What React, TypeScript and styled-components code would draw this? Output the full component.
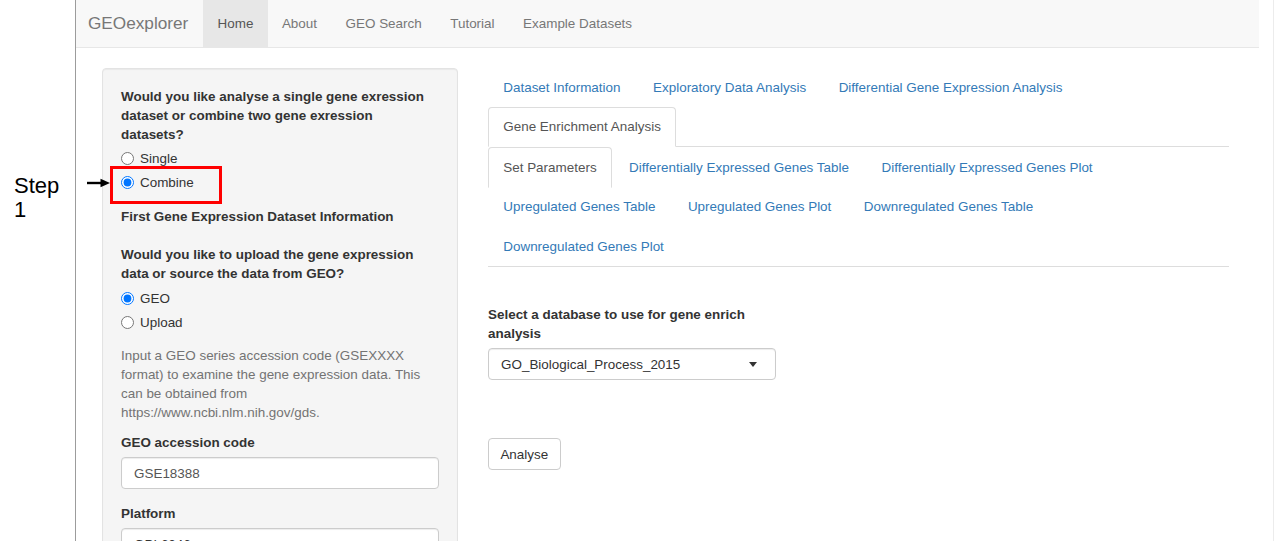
import React from "react";
import styled, { createGlobalStyle } from "styled-components";

const GlobalStyle = createGlobalStyle`
  html, body { margin: 0; padding: 0; background: #fff; }
  body {
    font-family: "Liberation Sans", Arial, Helvetica, sans-serif;
    font-size: 13.45px;
    line-height: 19px;
    color: #333;
    overflow: hidden;
  }
  * { box-sizing: border-box; }
`;

const Page = styled.div`
  display: flex;
  width: 1275px;
  height: 541px;
  overflow: hidden;
`;

const Gutter = styled.div`
  width: 76px;
  flex: none;
  border-right: 1px solid #9c9c9c;
  padding: 174px 0 0 14px;
  font-size: 22px;
  line-height: 24px;
  color: #000;
`;

const App = styled.div`
  width: 1183px;
  flex: none;
  display: flex;
  flex-direction: column;
`;

const ScrollEdge = styled.div`
  margin-left: 14px;
  width: 2px;
  flex: none;
  border-left: 1px solid #ececec;
`;

const Navbar = styled.nav`
  height: 48px;
  flex: none;
  display: flex;
  align-items: stretch;
  background: #f8f8f8;
  border-bottom: 1px solid #e7e7e7;
  padding-left: 12px;
`;

const Brand = styled.span`
  font-size: 17.2px;
  color: #777;
  display: flex;
  align-items: center;
  margin-right: 15px;
`;

const NavLink = styled.span<{ $active?: boolean }>`
  display: flex;
  align-items: center;
  padding: 0 14.25px;
  color: ${(p) => (p.$active ? "#555" : "#777")};
  background: ${(p) => (p.$active ? "#e7e7e7" : "transparent")};
`;

const Body = styled.div`
  display: flex;
  align-items: flex-start;
  gap: 30px;
  padding: 20px 0 0 26px;
`;

const Well = styled.div`
  width: 356px;
  min-height: 620px;
  flex: none;
  background: #f5f5f5;
  border: 1px solid #e3e3e3;
  border-radius: 4px;
  box-shadow: inset 0 1px 1px rgba(0, 0, 0, 0.05);
  padding: 18px;
`;

const FieldLabel = styled.div<{ $mt?: number }>`
  font-weight: bold;
  margin-top: ${(p) => p.$mt ?? 0}px;
`;

const RadioRow = styled.label<{ $mt?: number }>`
  position: relative;
  display: flex;
  align-items: center;
  gap: 6px;
  height: 19px;
  margin-top: ${(p) => p.$mt ?? 5}px;
  input {
    margin: 0;
    width: 13px;
    height: 13px;
  }
`;

const Highlight = styled.span`
  position: absolute;
  left: -11px;
  top: -7px;
  width: 112px;
  height: 38px;
  border: 3px solid #ff0000;
  pointer-events: none;
`;

const Arrow = styled.svg`
  position: absolute;
  left: -34px;
  top: 5px;
`;

const HelpText = styled.div<{ $mt?: number }>`
  color: #737373;
  line-height: 19.3px;
  margin-top: ${(p) => p.$mt ?? 0}px;
`;

const TextBox = styled.div<{ $mt?: number }>`
  margin-top: ${(p) => p.$mt ?? 0}px;
  height: 32px;
  display: flex;
  align-items: center;
  padding: 0 12px;
  background: #fff;
  border: 1px solid #ccc;
  border-radius: 4px;
  box-shadow: inset 0 1px 1px rgba(0, 0, 0, 0.075);
  color: #555;
`;

const SelectBox = styled.div<{ $mt?: number; $width?: number }>`
  margin-top: ${(p) => p.$mt ?? 0}px;
  width: ${(p) => (p.$width ? `${p.$width}px` : "100%")};
  height: 32px;
  display: flex;
  align-items: center;
  justify-content: space-between;
  padding: 0 18px 0 12px;
  background: #fff;
  border: 1px solid #ccc;
  border-radius: 4px;
  box-shadow: inset 0 1px 1px rgba(0, 0, 0, 0.075);
  color: #333;
`;

const Caret = styled.span`
  width: 0;
  height: 0;
  border-left: 4.5px solid transparent;
  border-right: 4.5px solid transparent;
  border-top: 5px solid #333;
`;

const Main = styled.div`
  width: 741px;
  flex: none;
  margin-top: -1px;
`;

const Tabs = styled.ul`
  list-style: none;
  margin: 0;
  padding: 0;
  display: flex;
  flex-wrap: wrap;
  border-bottom: 1px solid #ddd;
`;

const Tab = styled.li<{ $active?: boolean }>`
  margin: 0 2px -1px 0;
  padding: 9.75px 14.25px;
  line-height: 19px;
  border: 1px solid ${(p) => (p.$active ? "#ddd" : "transparent")};
  border-bottom-color: transparent;
  border-radius: 4px 4px 0 0;
  background: ${(p) => (p.$active ? "#fff" : "transparent")};
  color: ${(p) => (p.$active ? "#555" : "#337ab7")};
  white-space: nowrap;
`;

const Pane = styled.div`
  padding-top: 38px;
`;

const SelectLabel = styled.div`
  width: 288px;
  font-weight: bold;
`;

const Button = styled.button`
  margin-top: 58px;
  height: 32px;
  padding: 0 11.4px;
  font: inherit;
  color: #333;
  background: #fff;
  border: 1px solid #ccc;
  border-radius: 4px;
`;

const topTabs = [
  "Dataset Information",
  "Exploratory Data Analysis",
  "Differential Gene Expression Analysis",
  "Gene Enrichment Analysis",
];

const subTabs = [
  "Set Parameters",
  "Differentially Expressed Genes Table",
  "Differentially Expressed Genes Plot",
  "Upregulated Genes Table",
  "Upregulated Genes Plot",
  "Downregulated Genes Table",
  "Downregulated Genes Plot",
];

export default function AppRoot() {
  return (
    <>
      <GlobalStyle />
      <Page>
        <Gutter>
          Step
          <br />1
        </Gutter>
        <App>
          <Navbar>
            <Brand>GEOexplorer</Brand>
            <NavLink $active>Home</NavLink>
            <NavLink>About</NavLink>
            <NavLink>GEO Search</NavLink>
            <NavLink>Tutorial</NavLink>
            <NavLink>Example Datasets</NavLink>
          </Navbar>
          <Body>
            <Well>
              <FieldLabel>
                Would you like analyse a single gene exression dataset or combine two gene exression datasets?
              </FieldLabel>
              <RadioRow>
                <input type="radio" name="mode" readOnly />
                Single
              </RadioRow>
              <RadioRow>
                <input type="radio" name="mode" defaultChecked />
                Combine
                <Highlight />
                <Arrow width="24" height="10" viewBox="0 0 24 10">
                  <line x1="0" y1="5" x2="16" y2="5" stroke="#000" strokeWidth="2.4" />
                  <polygon points="13.5,0.8 23,5 13.5,9.2" fill="#000" />
                </Arrow>
              </RadioRow>
              <FieldLabel $mt={15}>First Gene Expression Dataset Information</FieldLabel>
              <FieldLabel $mt={18.5}>
                Would you like to upload the gene expression data or source the data from GEO?
              </FieldLabel>
              <RadioRow $mt={6}>
                <input type="radio" name="src" defaultChecked />
                GEO
              </RadioRow>
              <RadioRow>
                <input type="radio" name="src" readOnly />
                Upload
              </RadioRow>
              <HelpText $mt={14}>
                Input a GEO series accession code (GSEXXXX format) to examine the gene expression data. This can be
                obtained from https://www.ncbi.nlm.nih.gov/gds.
              </HelpText>
              <FieldLabel $mt={10}>GEO accession code</FieldLabel>
              <TextBox $mt={5.5}>GSE18388</TextBox>
              <FieldLabel $mt={14.5}>Platform</FieldLabel>
              <SelectBox $mt={5.5}>
                GPL6246
                <Caret />
              </SelectBox>
            </Well>
            <Main>
              <Tabs>
                {topTabs.map((t) => (
                  <Tab key={t} $active={t === "Gene Enrichment Analysis"}>
                    {t}
                  </Tab>
                ))}
              </Tabs>
              <Tabs>
                {subTabs.map((t) => (
                  <Tab key={t} $active={t === "Set Parameters"}>
                    {t}
                  </Tab>
                ))}
              </Tabs>
              <Pane>
                <SelectLabel>Select a database to use for gene enrich analysis</SelectLabel>
                <SelectBox $mt={5.5} $width={288}>
                  GO_Biological_Process_2015
                  <Caret />
                </SelectBox>
                <Button>Analyse</Button>
              </Pane>
            </Main>
          </Body>
        </App>
        <ScrollEdge />
      </Page>
    </>
  );
}
